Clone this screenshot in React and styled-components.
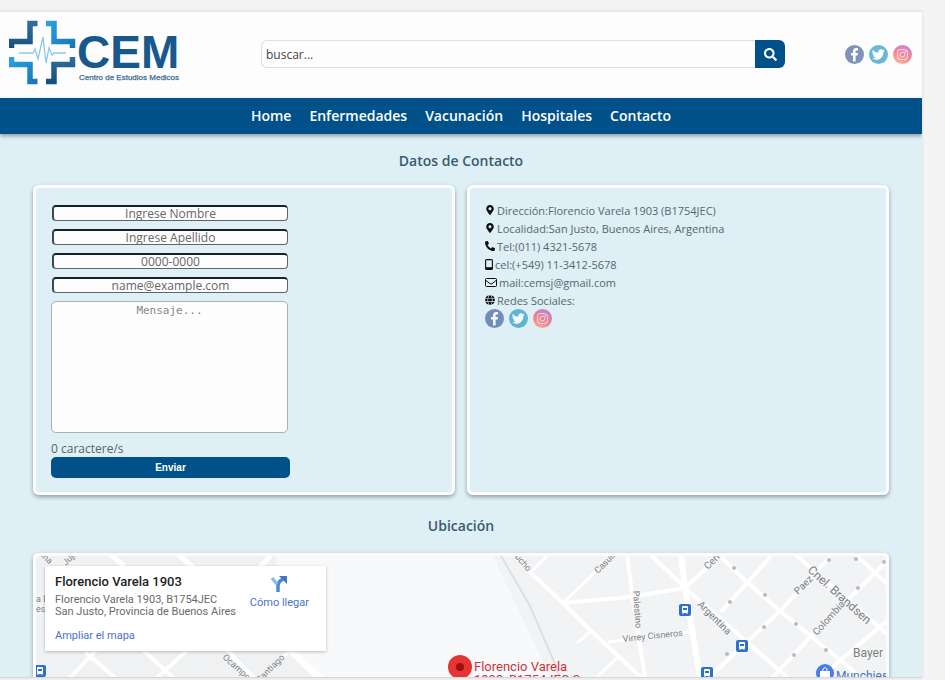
import React, { useState } from "react";
import styled, { createGlobalStyle } from "styled-components";
import { FaSearch, FaMapMarkerAlt, FaPhoneAlt, FaGlobe } from "react-icons/fa";

const GlobalStyle = createGlobalStyle`
  *, *::before, *::after { box-sizing: border-box; }
  body { margin: 0; background: #f4f4f4; font-family: "Open Sans", "Noto Sans", sans-serif; }
`;

const Frame = styled.div`
  display: flex;
  height: 100vh;
  padding: 11px 23px 2px 0;
`;

const Page = styled.div`
  flex: 1;
  min-width: 0;
  overflow: hidden;
  background: #deeff5;
  border-top: 1px solid #e6e8ea;
  border-bottom: 1px solid #d5d9dc;
  box-shadow: 0 0 3px rgba(0, 0, 0, 0.12);
`;

const Header = styled.header`
  display: flex;
  align-items: center;
  height: 86px;
  padding: 0 10px 2px 9px;
  background: #fdfdfe;
`;

const LogoLink = styled.a`
  display: block;
  flex: none;
  height: 66px;
  margin-bottom: 4px;
`;

const Search = styled.form`
  display: flex;
  flex: 1;
  min-width: 0;
  height: 28px;
  margin: 0 60px 0 80px;
`;

const SearchInput = styled.input`
  flex: 1;
  min-width: 0;
  padding: 0 4px;
  border: 1px solid #dcdee0;
  border-right: 0;
  border-radius: 6px 0 0 6px;
  background: #fdfdfe;
  color: #444;
  font: 12px "Open Sans", sans-serif;
  outline: none;
  &::placeholder { color: #444; opacity: 1; }
`;

const SearchButton = styled.button`
  display: flex;
  align-items: center;
  justify-content: center;
  width: 30px;
  padding: 0;
  border: 0;
  border-radius: 0 6px 6px 0;
  background: #005189;
  color: #fff;
  font-size: 13px;
`;

const SocialList = styled.div`
  display: flex;
  gap: 5px;
`;

const SocialLink = styled.a`
  display: block;
  width: 19px;
  height: 19px;
  opacity: 0.65;
  svg { display: block; }
`;

const Nav = styled.nav`
  position: relative;
  display: flex;
  align-items: center;
  justify-content: center;
  gap: 18px;
  height: 36px;
  padding-bottom: 1px;
  background: #005189;
  box-shadow: 0 2px 4px rgba(0, 0, 0, 0.35);
`;

const NavLink = styled.a`
  color: #fff;
  font: 600 14px "Open Sans", sans-serif;
  text-decoration: none;
`;

const Main = styled.main`
  padding: 17px 33px 24px;
`;

const Heading = styled.h2`
  margin: 0;
  color: #3c5a72;
  font: 600 14px/20px "Open Sans", sans-serif;
  text-align: center;
`;

const Columns = styled.div`
  display: grid;
  grid-template-columns: 1fr 1fr;
  gap: 12px;
  margin: 14px 0 21px;
`;

const Card = styled.section`
  min-height: 310px;
  padding: 17px 15px 14px;
  border: 3px solid #fbfdfe;
  border-radius: 6px;
  box-shadow: 0 2px 4px rgba(0, 0, 0, 0.35);
`;

const ContactCard = styled(Card)`
  padding-top: 13px;
`;

const Form = styled.form`
  display: flex;
  flex-direction: column;
  width: 239px;
`;

const Field = styled.input`
  width: 236px;
  height: 16px;
  margin: 0 0 8px 1px;
  padding: 0;
  border: 1px solid #5c666e;
  border-top: 2px solid #17212a;
  border-left: 2px solid #3c464e;
  border-radius: 4px;
  background: #fdfdfe;
  color: #555;
  font: 12px/13px "Open Sans", sans-serif;
  text-align: center;
  outline: none;
  &::placeholder { color: #666; opacity: 1; }
`;

const Message = styled.textarea`
  width: 237px;
  height: 132px;
  padding: 1px;
  border: 1px solid #a9b0b4;
  border-radius: 5px;
  background: #fdfdfe;
  color: #777;
  font: 11px/16px "DejaVu Sans Mono", monospace;
  text-align: center;
  resize: none;
  outline: none;
  &::placeholder { color: #888; opacity: 1; }
`;

const Counter = styled.output`
  margin-top: 8px;
  color: #5a646c;
  font: 12px/16px "Open Sans", sans-serif;
`;

const Submit = styled.button`
  height: 21px;
  padding: 0;
  border: 0;
  border-radius: 5px;
  background: #005189;
  color: #fff;
  font: bold 10px "Liberation Sans", sans-serif;
`;

const ContactList = styled.ul`
  margin: 0;
  padding: 0;
  list-style: none;
`;

const ContactItem = styled.li`
  display: flex;
  align-items: center;
  gap: 2px;
  height: 18px;
  color: #5b656c;
  font: 11px "Open Sans", sans-serif;
  white-space: nowrap;
  svg { flex: none; color: #0b0d0f; }
`;

const MapBox = styled.section`
  position: relative;
  height: 330px;
  margin-top: 17px;
  overflow: hidden;
  border: 3px solid #fbfdfe;
  border-radius: 5px;
  box-shadow: 0 2px 4px rgba(0, 0, 0, 0.35);
`;

const MapCanvas = styled.svg`
  display: block;
  width: 100%;
  height: 100%;
`;

const MapCard = styled.div`
  position: absolute;
  top: 10px;
  left: 9px;
  display: flex;
  justify-content: space-between;
  width: 281px;
  height: 85px;
  padding: 7px 17px 0 10px;
  background: #fff;
  box-shadow: 0 1px 3px rgba(0, 0, 0, 0.25);
`;

const PlaceName = styled.h3`
  margin: 0 0 4px;
  color: #222;
  font: 500 13px/17px Roboto, sans-serif;
`;

const PlaceAddress = styled.p`
  margin: 0 0 4px;
  color: #6a6a6a;
  font: 11px/12px Roboto, sans-serif;
  white-space: nowrap;
`;

const MapLink = styled.a`
  color: #4a72c8;
  font: 11px/14px Roboto, sans-serif;
  text-decoration: none;
`;

const Directions = styled(MapLink)`
  display: flex;
  flex-direction: column;
  align-items: center;
  gap: 3px;
  padding-top: 2px;
`;

function Logo() {
  return (
    <svg width="172" height="66" viewBox="9 19 172 66" role="img" aria-label="CEM Centro de Estudios Medicos">
      <defs>
        <linearGradient id="dark" x1="0" y1="0" x2="0" y2="1">
          <stop offset="0" stopColor="#2f6f9c" />
          <stop offset="1" stopColor="#155180" />
        </linearGradient>
        <linearGradient id="bright" x1="0" y1="0" x2="1" y2="1">
          <stop offset="0" stopColor="#28a2e2" />
          <stop offset="1" stopColor="#1677b9" />
        </linearGradient>
      </defs>
      <g fill="none" strokeWidth="5.5">
        <path d="M37.5 23.5H30V41.5H11.5V48" stroke="url(#dark)" />
        <path d="M46 23.5H54V41.5H72.5V48" stroke="url(#bright)" />
        <path d="M11.5 57V64.5H30V81.5H37.5" stroke="url(#bright)" />
        <path d="M72.5 57V64.5H54V81.5H46" stroke="url(#dark)" />
      </g>
      <path d="M19 53H33L35 49L38 59L43 37L46 63L49 48L52 55L54 53H66" fill="none" stroke="#8dc8ec" strokeWidth="1.3" />
      <text x="77" y="68" fontFamily="Liberation Sans, sans-serif" fontWeight="bold" fontSize="46" fill="#17598c">CEM</text>
      <text x="79" y="80" fontFamily="Liberation Sans, sans-serif" fontSize="8" fill="#3d6b8e" stroke="#3d6b8e" strokeWidth=".25">Centro de Estudios Medicos</text>
    </svg>
  );
}

function Social({ idPrefix }) {
  return (
    <SocialList>
      <SocialLink href="#facebook" aria-label="Facebook">
        <svg width="19" height="19" viewBox="0 0 19 19">
          <circle cx="9.5" cy="9.5" r="9.5" fill="#3b5998" />
          <path d="M8 16.5V10.5H6V8H8V6.3C8 4.2 9.2 3 11.2 3H13V5.4H11.8C11 5.4 10.6 5.8 10.6 6.5V8H13L12.6 10.5H10.6V16.5Z" fill="#fff" />
        </svg>
      </SocialLink>
      <SocialLink href="#twitter" aria-label="Twitter">
        <svg width="19" height="19" viewBox="0 0 19 19">
          <circle cx="9.5" cy="9.5" r="9.5" fill="#1b95be" />
          <path d="M15.8 6.1L14.4 7C14.5 11.6 11.2 14.8 7.3 14.8C5.7 14.8 4.3 14.3 3.3 13.6C4.7 13.6 5.8 13.2 6.7 12.5C5.5 12.4 4.7 11.7 4.3 10.7H5.4C4.1 10.2 3.4 9.2 3.4 8L4.5 8.3C3.4 7.4 3.1 6 3.8 4.9C5.2 6.5 7.1 7.5 9.3 7.6C8.9 5.8 10.2 4.3 11.9 4.3C12.6 4.3 13.3 4.6 13.8 5.1L15.4 4.5L14.5 5.8Z" fill="#fff" />
        </svg>
      </SocialLink>
      <SocialLink href="#instagram" aria-label="Instagram">
        <svg width="19" height="19" viewBox="0 0 19 19">
          <defs>
            <linearGradient id={`${idPrefix}-ig`} x1=".3" y1="1" x2=".7" y2="0">
              <stop offset="0" stopColor="#fb8a5c" />
              <stop offset=".5" stopColor="#ee4468" />
              <stop offset="1" stopColor="#a94bb5" />
            </linearGradient>
          </defs>
          <circle cx="9.5" cy="9.5" r="9.5" fill={`url(#${idPrefix}-ig)`} />
          <g fill="none" stroke="#fff" strokeWidth="1" opacity=".8">
            <rect x="4.5" y="4.5" width="10" height="10" rx="3" />
            <circle cx="9.5" cy="9.5" r="2.5" />
          </g>
          <circle cx="12.4" cy="6.6" r=".7" fill="#fff" />
        </svg>
      </SocialLink>
    </SocialList>
  );
}

const PhoneGlyph = () => (
  <svg width="8" height="11" viewBox="0 0 8 11">
    <rect x=".6" y=".6" width="6.8" height="9.8" rx="1" fill="none" stroke="currentColor" strokeWidth="1.1" />
    <path d="M1 8.2H7V10H1Z" fill="currentColor" />
  </svg>
);

const MailGlyph = () => (
  <svg width="12" height="9" viewBox="0 0 12 9">
    <rect x=".5" y=".5" width="11" height="8" rx="1" fill="none" stroke="currentColor" />
    <path d="M1 2.5L5 5.7Q6 6.3 7 5.7L11 2.5" fill="none" stroke="currentColor" />
  </svg>
);

const roads = [
  ["M516 558L530 572L563 603L590 630L630 667L670 705", 4],
  ["M563 603L612 556M530 573L547 556M577 643L590 632M597 677L620 655", 3],
  ["M563 603L630 597L685 588L722 554", 4],
  ["M627 554L633 600L645 677L655 740", 4],
  ["M608 642L692 632", 3],
  ["M681 554L685 588L700 677L714 760", 6],
  ["M650 554L685 588L740 636L788 678L850 735", 4],
  ["M718 554L747 582L780 611L840 660L890 702", 4],
  ["M771 556L721 612M830 557L780 611L717 670L690 697", 4],
  ["M795 554L888 635M855 554L888 585", 4],
  ["M888 560L812 635L775 675L740 712", 4],
  ["M888 620L838 662L800 697", 4],
  ["M110 554L124 566M178 554L194 568M270 556L256 572", 5],
  ["M40 606L50 616M85 652L120 682M100 646L66 682", 4],
  ["M143 650L180 684M190 648L150 684M225 648L258 682M290 650L258 684", 4],
  ["M286 646L330 688", 7],
];

const labels = [
  ["Cnel. Brandsen", 807, 571, 42, 12],
  ["Argentina", 697, 605, 45, 10],
  ["Virrey Cisneros", 623, 642, -6, 9],
  ["Palestino", 633, 591, 86, 9],
  ["Paez", 798, 595, -45, 10],
  ["Colombia", 817, 636, -48, 10],
  ["Cerro", 708, 570, -45, 10],
  ["Casullo", 598, 574, -45, 9],
  ["Ayacucho", 502, 542, 50, 9],
  ["Ocampo", 222, 658, 42, 9],
  ["Santiago", 260, 683, -45, 9],
  ["Alsina", 31, 548, 42, 9],
  ["Jujuy", 66, 566, -45, 9],
];

const stops = [[685, 610], [742, 646], [707, 673], [40, 671]];
const arrows = [[734, 568], [765, 595], [730, 602], [796, 624], [764, 627], [727, 654], [794, 655], [826, 650], [829, 560], [856, 559], [884, 562], [858, 588]];

function StreetMap() {
  return (
    <MapCanvas viewBox="36 556 850 324" preserveAspectRatio="xMidYMin slice" role="img" aria-label="Mapa de Florencio Varela 1903">
      <rect x="36" y="556" width="850" height="324" fill="#f8f9fb" />
      <path d="M36 556H275L293 650L400 755V880H36Z" fill="#f0f1f2" />
      <path d="M493 556H886V880H610L550 677Z" fill="#f2f3f4" />
      <g fill="none" stroke="#fff" strokeLinejoin="round">
        {roads.map(([d, width]) => <path key={d} d={d} strokeWidth={width} />)}
      </g>
      <path d="M501 556L530 606L552 657L585 740" fill="none" stroke="#dedfe1" strokeWidth="2" />
      <g fill="#b9bbbe">
        {arrows.map(([x, y]) => <circle key={`${x}-${y}`} cx={x} cy={y} r="2" />)}
      </g>
      <g fontFamily="Roboto, sans-serif" fill="#7b7f84" stroke="#f6f7f8" strokeWidth="2" paintOrder="stroke">
        {labels.map(([name, x, y, angle, size]) => (
          <text key={name} x={x} y={y} fontSize={size} transform={`rotate(${angle} ${x} ${y})`}>{name}</text>
        ))}
        <text x="853" y="657" fontSize="12">Bayer</text>
        <text x="36" y="602" fontSize="9">a E</text>
        <text x="36" y="612" fontSize="9">es</text>
      </g>
      {stops.map(([x, y]) => (
        <g key={x}>
          <rect x={x - 6} y={y - 6} width="12" height="12" rx="2" fill="#2f70cf" />
          <rect x={x - 3} y={y - 4} width="6" height="7" rx="1" fill="#fff" />
          <path d={`M${x - 2} ${y - 2}H${x + 2}V${y}H${x - 2}Z`} fill="#2f70cf" />
          <path d={`M${x - 2} ${y + 4}V${y + 3}M${x + 2} ${y + 4}V${y + 3}`} stroke="#fff" />
        </g>
      ))}
      <circle cx="825" cy="673" r="9" fill="#4a7de8" />
      <path d="M820 671H830V678H820Z" fill="#fff" />
      <path d="M823 672V669Q825 666 827 669V672" fill="none" stroke="#fff" />
      <text x="836" y="680" fontFamily="Roboto, sans-serif" fontSize="12" fill="#4d6fc0">Munchies</text>
      <circle cx="460" cy="667" r="12" fill="#e53431" />
      <circle cx="460" cy="667" r="4" fill="#a30f10" />
      <g fontFamily="Roboto, sans-serif" fontSize="13" fill="#c9353b">
        <text x="474" y="671">Florencio Varela</text>
        <text x="474" y="684">1903, B1754JEC S</text>
      </g>
    </MapCanvas>
  );
}

const navItems = ["Home", "Enfermedades", "Vacunación", "Hospitales", "Contacto"];

const fields = [
  ["text", "Nombre", "Ingrese Nombre"],
  ["text", "Apellido", "Ingrese Apellido"],
  ["tel", "Teléfono", "0000-0000"],
  ["email", "Correo", "name@example.com"],
];

const contacts = [
  [<FaMapMarkerAlt size={10} />, "Dirección:Florencio Varela 1903 (B1754JEC)"],
  [<FaMapMarkerAlt size={10} />, "Localidad:San Justo, Buenos Aires, Argentina"],
  [<FaPhoneAlt size={10} />, "Tel:(011) 4321-5678"],
  [<PhoneGlyph />, "cel:(+549) 11-3412-5678"],
  [<MailGlyph />, "mail:cemsj@gmail.com"],
  [<FaGlobe size={10} />, "Redes Sociales:"],
];

export default function App() {
  const [message, setMessage] = useState("");
  return (
    <Frame>
      <GlobalStyle />
      <Page>
        <Header>
          <LogoLink href="#home"><Logo /></LogoLink>
          <Search onSubmit={(e) => e.preventDefault()}>
            <SearchInput type="search" aria-label="Buscar" placeholder="buscar..." />
            <SearchButton aria-label="Buscar"><FaSearch /></SearchButton>
          </Search>
          <Social idPrefix="header" />
        </Header>
        <Nav>
          {navItems.map((item) => <NavLink key={item} href={`#${item.toLowerCase()}`}>{item}</NavLink>)}
        </Nav>
        <Main>
          <Heading>Datos de Contacto</Heading>
          <Columns>
            <Card>
              <Form onSubmit={(e) => e.preventDefault()}>
                {fields.map(([type, label, placeholder]) => (
                  <Field key={label} type={type} aria-label={label} placeholder={placeholder} />
                ))}
                <Message aria-label="Mensaje" placeholder="Mensaje..." value={message} onChange={(e) => setMessage(e.target.value)} />
                <Counter>{message.length} caractere/s</Counter>
                <Submit>Enviar</Submit>
              </Form>
            </Card>
            <ContactCard>
              <ContactList>
                {contacts.map(([icon, text]) => <ContactItem key={text}>{icon}<span>{text}</span></ContactItem>)}
              </ContactList>
              <Social idPrefix="card" />
            </ContactCard>
          </Columns>
          <Heading>Ubicación</Heading>
          <MapBox>
            <StreetMap />
            <MapCard>
              <div>
                <PlaceName>Florencio Varela 1903</PlaceName>
                <PlaceAddress>Florencio Varela 1903, B1754JEC<br />San Justo, Provincia de Buenos Aires</PlaceAddress>
                <MapLink href="#mapa">Ampliar el mapa</MapLink>
              </div>
              <Directions href="#llegar">
                <svg width="18" height="18" viewBox="0 0 18 18">
                  <path d="M8 17V11Q8 8 10 6L13 4" fill="none" stroke="#4c87d6" strokeWidth="3.5" />
                  <path d="M9 1H17V9Z" fill="#3c78cc" />
                  <path d="M2 3L7 9" stroke="#86bdf0" strokeWidth="3.5" />
                </svg>
                Cómo llegar
              </Directions>
            </MapCard>
          </MapBox>
        </Main>
      </Page>
    </Frame>
  );
}
